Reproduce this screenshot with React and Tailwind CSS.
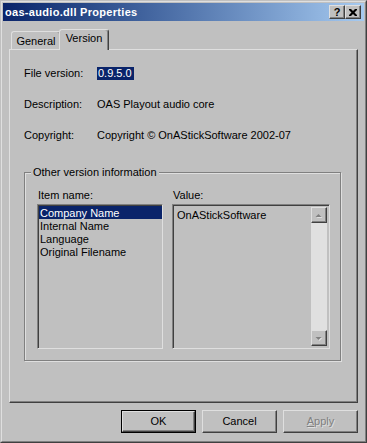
import React from 'react';

const raised = "border border-t-[#dfdfdf] border-l-[#dfdfdf] border-r-[#404040] border-b-[#404040] shadow-[inset_-1px_-1px_0_#808080]";
const sunken = "border border-t-[#808080] border-l-[#808080] border-r-[#dfdfdf] border-b-[#dfdfdf] shadow-[inset_1px_1px_0_#404040]";

const ScrollArrow = ({ up }) => (
    <div className={`w-[16px] h-[16px] bg-[#c0c0c0] ${raised} flex items-center justify-center`}>
        <svg width="8" height="5" viewBox="0 0 8 5">
            {up ? (
                <>
                    <polygon points="1.5,5 4.5,2 7.5,5" fill="#dfdfdf" />
                    <polygon points="0.5,4 3.5,1 6.5,4" fill="#808080" />
                </>
            ) : (
                <>
                    <polygon points="1.5,2 7.5,2 4.5,5" fill="#dfdfdf" />
                    <polygon points="0.5,1 6.5,1 3.5,4" fill="#808080" />
                </>
            )}
        </svg>
    </div>
);

const Row = ({ label, children }) => (
    <div className="flex h-[13px]">
        <div className="w-[73px]">{label}</div>
        <div>{children}</div>
    </div>
);

const Button = ({ children, def, disabled }) => (
    <div className={`w-[75px] h-[23px] ${def ? 'border border-black' : ''}`}>
        <div className={`w-full h-full ${raised} flex items-center justify-center ${disabled ? 'text-[#808080] [text-shadow:1px_1px_0_#dfdfdf]' : ''}`}>
            {children}
        </div>
    </div>
);

export default function App() {
    const items = ['Company Name', 'Internal Name', 'Language', 'Original Filename'];

    return (
        <div className="w-[367px] h-[443px] bg-[#c0c0c0] border border-t-[#c0c0c0] border-l-[#c0c0c0] border-r-[#404040] border-b-[#404040] font-['Liberation_Sans',Arial,sans-serif] text-[11px] leading-[13px] text-black select-none">
            <div className="h-full border border-t-[#dfdfdf] border-l-[#dfdfdf] border-r-[#808080] border-b-[#808080] p-px flex flex-col">
                {/* title bar */}
                <div className="h-[18px] shrink-0 bg-linear-to-r from-[#0a246a] to-[#a6caf0] flex items-center pl-[2px] pr-[3px]">
                    <span className="flex-1 text-white font-bold tracking-[0.3px]">oas-audio.dll Properties</span>
                    <div className="flex">
                        <div className={`w-[16px] h-[14px] bg-[#c0c0c0] ${raised} flex items-center justify-center font-bold text-[11px] leading-[11px]`}>?</div>
                        <div className={`w-[16px] h-[14px] bg-[#c0c0c0] ${raised} flex items-center justify-center`}>
                            <svg width="8" height="7" viewBox="0 0 8 7">
                                <path d="M0 0h2l2 2 2-2h2v1l-2.5 2.5L8 6v1H6L4 5 2 7H0V6l2.5-2.5L0 1z" fill="#000" />
                            </svg>
                        </div>
                    </div>
                </div>

                <div className="flex-1 flex flex-col px-[6px] pt-[8px]">
                    {/* tabs */}
                    <div className="flex items-end h-[20px] pl-[2px]">
                        <div className="w-[50px] h-[18px] border-l border-t border-r border-l-[#dfdfdf] border-t-[#dfdfdf] border-r-[#404040] shadow-[inset_-1px_0_0_#808080] rounded-t-[3px] flex justify-center pt-[3px]">
                            General
                        </div>
                        <div className="relative z-10 -ml-[2px] -mb-px w-[50px] h-[21px] bg-[#c0c0c0] border-l border-t border-r border-l-[#dfdfdf] border-t-[#dfdfdf] border-r-[#404040] shadow-[inset_-1px_0_0_#808080] rounded-t-[3px] flex justify-center pt-[2px]">
                            Version
                        </div>
                    </div>

                    {/* panel */}
                    <div className="h-[354px] shrink-0 border border-t-[#dfdfdf] border-l-[#dfdfdf] border-r-[#404040] border-b-[#404040] shadow-[inset_-1px_-1px_0_#808080] pt-[17px] pl-[14px]">
                        <div className="flex flex-col gap-[18px]">
                            <Row label="File version:">
                                <span className="bg-[#0a246a] text-white pl-px pr-[2px] inline-block h-[13px]">0.9.5.0</span>
                            </Row>
                            <Row label="Description:">OAS Playout audio core</Row>
                            <Row label="Copyright:">Copyright © OnAStickSoftware 2002-07</Row>
                        </div>

                        {/* group box */}
                        <div className="relative mt-[30px] w-[317px] h-[189px] border border-[#808080] shadow-[inset_1px_1px_0_#dfdfdf,1px_1px_0_#dfdfdf] pt-[16px] pl-[12px]">
                            <span className="absolute -top-[7px] left-[6px] px-[2px] bg-[#c0c0c0]">Other version information</span>
                            <div className="flex gap-[9px]">
                                <div className="w-[126px] flex flex-col">
                                    <div className="ml-px h-[13px] mb-[2px]">Item name:</div>
                                    <div className={`h-[145px] ${sunken} pt-px`}>
                                        {items.map((it, i) => (
                                            <div key={it} className={`ml-px pl-px h-[13px] leading-[14px] ${i === 0 ? 'bg-[#0a246a] text-white' : ''}`}>
                                                {it}
                                            </div>
                                        ))}
                                    </div>
                                </div>
                                <div className="w-[158px] flex flex-col">
                                    <div className="ml-px h-[13px] mb-[2px]">Value:</div>
                                    <div className={`h-[145px] ${sunken} p-[2px] flex`}>
                                        <div className="flex-1 pl-[2px] pt-[2px]">OnAStickSoftware</div>
                                        <div className="w-[16px] flex flex-col">
                                            <ScrollArrow up />
                                            <div className="flex-1 bg-[#e0e0e0]" />
                                            <ScrollArrow />
                                        </div>
                                    </div>
                                </div>
                            </div>
                        </div>
                    </div>

                    {/* buttons */}
                    <div className="mt-[7px] flex justify-end gap-[6px]">
                        <Button def>OK</Button>
                        <Button>Cancel</Button>
                        <Button disabled><span><span className="underline">A</span>pply</span></Button>
                    </div>
                </div>
            </div>
        </div>
    );
}
